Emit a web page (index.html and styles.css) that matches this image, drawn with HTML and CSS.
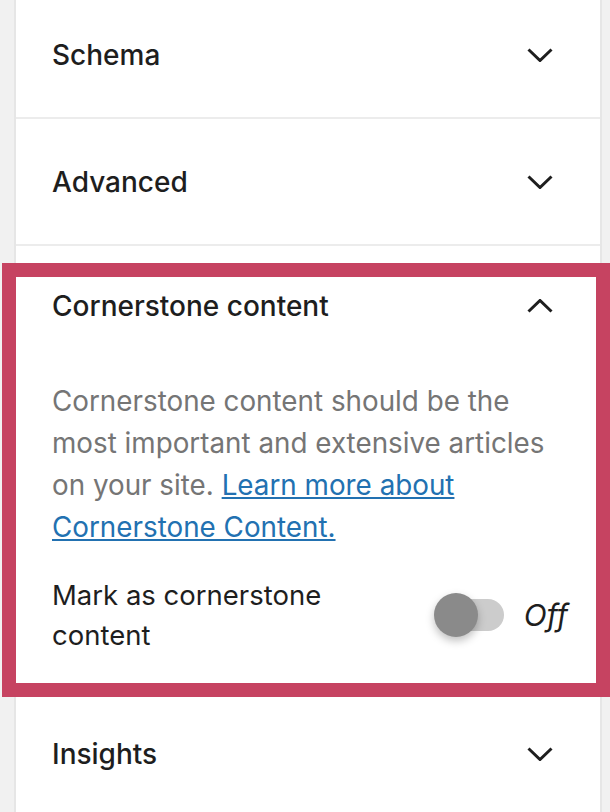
FILE: index.html
```html
<!DOCTYPE html>
<html lang="en">
<head>
    <meta charset="UTF-8">
    <meta name="viewport" content="width=device-width, initial-scale=1.0">
    <title>Yoast sidebar</title>
    <link rel="stylesheet" href="styles.css">
</head>
<body>
    <div class="sidebar">
        <!-- Collapsed panels -->
        <div class="panel">
            <button class="panel-head">
                <span>Schema</span>
                <svg class="chevron" viewBox="0 0 26 14" width="26" height="14"><path d="M1.5 1.5 L13 12.5 L24.5 1.5"/></svg>
            </button>
        </div>
        <div class="panel">
            <button class="panel-head">
                <span>Advanced</span>
                <svg class="chevron" viewBox="0 0 26 14" width="26" height="14"><path d="M1.5 1.5 L13 12.5 L24.5 1.5"/></svg>
            </button>
        </div>

        <!-- Open panel -->
        <div class="panel is-open">
            <button class="panel-head panel-head-open">
                <span>Cornerstone content</span>
                <svg class="chevron" viewBox="0 0 26 14" width="26" height="14"><path d="M1.5 12.5 L13 1.5 L24.5 12.5"/></svg>
            </button>
            <div class="panel-body">
                <p class="description">Cornerstone content should be the most important and extensive articles on your site. <a href="#">Learn more about Cornerstone Content.</a></p>
                <div class="toggle-row">
                    <label class="toggle-label" for="cornerstone">Mark as cornerstone content</label>
                    <div class="toggle">
                        <span class="track"><span class="knob"></span></span>
                        <span class="toggle-state">Off</span>
                    </div>
                </div>
            </div>
        </div>

        <div class="panel">
            <button class="panel-head">
                <span>Insights</span>
                <svg class="chevron" viewBox="0 0 26 14" width="26" height="14"><path d="M1.5 1.5 L13 12.5 L24.5 1.5"/></svg>
            </button>
        </div>
    </div>

    <!-- Highlight frame drawn over the open panel -->
    <div class="highlight"></div>
</body>
</html>
```

FILE: styles.css
```css
body {
    margin: 0;
    padding: 0 0 0 14px;
    background: #f1f1f1;
    font-family: Inter, "Noto Sans", sans-serif;
    color: #1e1e1e;
    overflow: hidden;
}
.sidebar {
    margin-top: -8px;
    margin-right: 8px;
    background: #fff;
    border-left: 2px solid #e6e6e6;
    border-right: 2px solid #e6e6e6;
}
.panel {
    border-bottom: 2px solid #ececec;
}
.panel-head {
    display: flex;
    align-items: center;
    justify-content: space-between;
    width: 100%;
    height: 125px;
    padding: 0 47px 0 36px;
    border: none;
    background: none;
    font-family: inherit;
    font-size: 28px;
    font-weight: 500;
    color: #1e1e1e;
    box-sizing: border-box;
    text-align: left;
}
.panel-head-open {
    height: 119px;
}
.chevron {
    flex: none;
    fill: none;
    stroke: #1e1e1e;
    stroke-width: 3;
}
/* Open panel content */
.panel-body {
    padding: 15px 32px 34px 36px;
}
.description {
    margin: 0;
    font-size: 27.8px;
    line-height: 42px;
    color: #757575;
}
.description a {
    color: #2271b1;
}
.toggle-row {
    display: flex;
    align-items: center;
    justify-content: space-between;
    margin-top: 27px;
}
.toggle-label {
    width: 330px;
    font-size: 27.5px;
    line-height: 40px;
}
.toggle {
    display: flex;
    align-items: center;
    gap: 20px;
}
.track {
    position: relative;
    display: block;
    width: 58px;
    height: 32px;
    border-radius: 16px;
    background: #cccccc;
}
.knob {
    position: absolute;
    left: -12px;
    top: -6px;
    width: 44px;
    height: 44px;
    border-radius: 50%;
    background: #8a8a8a;
    box-shadow: 0 4px 8px rgba(0, 0, 0, 0.25);
}
.toggle-state {
    font-size: 30px;
    font-style: italic;
}
.highlight {
    position: absolute;
    left: 2px;
    top: 263px;
    width: 580px;
    height: 406px;
    border: 14px solid #c64361;
}
```
